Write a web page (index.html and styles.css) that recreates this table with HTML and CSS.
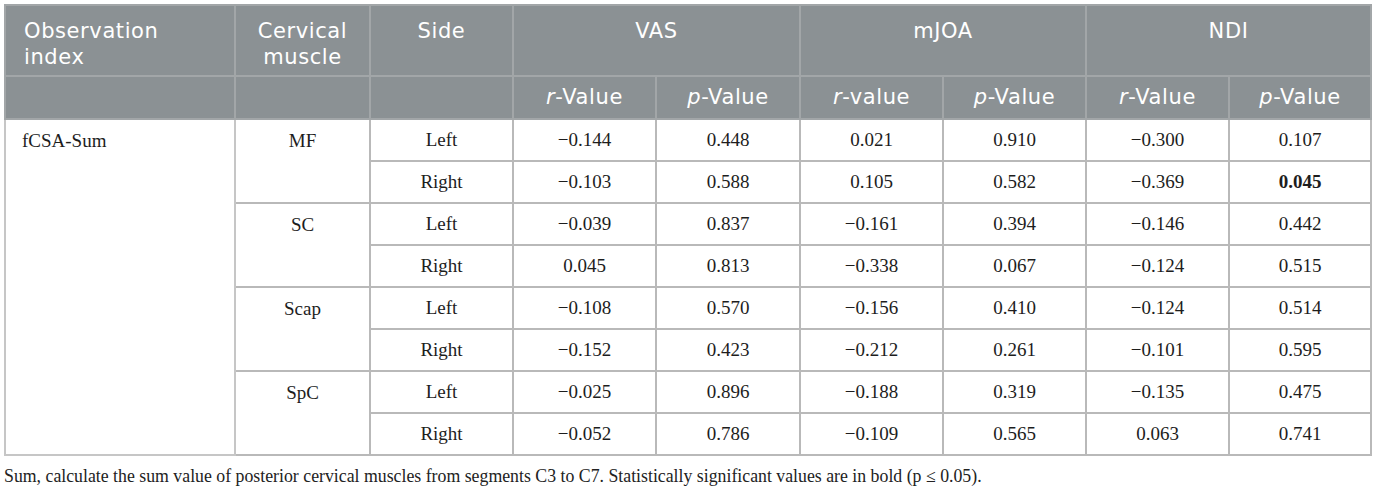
FILE: index.html
```html
<!DOCTYPE html>
<html lang="en">
<head>
<meta charset="utf-8">
<title>Correlation table</title>
<link rel="stylesheet" href="styles.css">
</head>
<body>
<div class="wrap">
  <table class="data">
    <colgroup>
      <col class="c-obs">
      <col class="c-mus">
      <col class="c-side">
      <col class="c-v">
      <col class="c-v2">
      <col class="c-v">
      <col class="c-v">
      <col class="c-v">
      <col class="c-last">
    </colgroup>
    <thead>
      <tr class="h1">
        <th class="left"><span class="ln">Observation</span><span class="ln">index</span></th>
        <th><span class="ln">Cervical</span><span class="ln">muscle</span></th>
        <th>Side</th>
        <th colspan="2">VAS</th>
        <th colspan="2">mJOA</th>
        <th colspan="2">NDI</th>
      </tr>
      <tr class="h2">
        <th></th>
        <th></th>
        <th></th>
        <th><i>r</i>-Value</th>
        <th><i>p</i>-Value</th>
        <th><i>r</i>-value</th>
        <th><i>p</i>-Value</th>
        <th><i>r</i>-Value</th>
        <th><i>p</i>-Value</th>
      </tr>
    </thead>
    <tbody>
      <tr>
        <td class="obs" rowspan="8">fCSA-Sum</td>
        <td class="mus" rowspan="2">MF</td>
        <td>Left</td><td>−0.144</td><td>0.448</td><td>0.021</td><td>0.910</td><td>−0.300</td><td>0.107</td>
      </tr>
      <tr>
        <td>Right</td><td>−0.103</td><td>0.588</td><td>0.105</td><td>0.582</td><td>−0.369</td><td><b>0.045</b></td>
      </tr>
      <tr>
        <td class="mus" rowspan="2">SC</td>
        <td>Left</td><td>−0.039</td><td>0.837</td><td>−0.161</td><td>0.394</td><td>−0.146</td><td>0.442</td>
      </tr>
      <tr>
        <td>Right</td><td>0.045</td><td>0.813</td><td>−0.338</td><td>0.067</td><td>−0.124</td><td>0.515</td>
      </tr>
      <tr>
        <td class="mus" rowspan="2">Scap</td>
        <td>Left</td><td>−0.108</td><td>0.570</td><td>−0.156</td><td>0.410</td><td>−0.124</td><td>0.514</td>
      </tr>
      <tr>
        <td>Right</td><td>−0.152</td><td>0.423</td><td>−0.212</td><td>0.261</td><td>−0.101</td><td>0.595</td>
      </tr>
      <tr>
        <td class="mus" rowspan="2">SpC</td>
        <td>Left</td><td>−0.025</td><td>0.896</td><td>−0.188</td><td>0.319</td><td>−0.135</td><td>0.475</td>
      </tr>
      <tr>
        <td>Right</td><td>−0.052</td><td>0.786</td><td>−0.109</td><td>0.565</td><td>0.063</td><td>0.741</td>
      </tr>
    </tbody>
  </table>
  <p class="note">Sum, calculate the sum value of posterior cervical muscles from segments C3 to C7. Statistically significant values are in bold (p ≤ 0.05).</p>
</div>
</body>
</html>
```

FILE: styles.css
```css
html, body {
  margin: 0;
  padding: 0;
  background: #ffffff;
}

.wrap {
  padding: 4px 5px 0 4px;
}

.data {
  width: 1366px;
  table-layout: fixed;
  border-collapse: collapse;
  border: 2px solid #c6c6c6;
}

.c-obs { width: 230px; }
.c-mus { width: 135px; }
.c-side { width: 143px; }
.c-v { width: 143px; }
.c-v2 { width: 144px; }
.c-last { width: 142px; }

.data th {
  background: #8b9194;
  color: #ffffff;
  font-family: "DejaVu Sans", "Open Sans", sans-serif;
  font-weight: 400;
  font-size: 21px;
  letter-spacing: 0.6px;
  line-height: 26px;
  text-align: center;
  border: 2px solid #a2a6a8;
  padding: 0 8px;
}

.data th .ln {
  display: block;
  height: 26px;
}

.data th.left {
  text-align: left;
  padding-left: 18px;
}

.h1 th {
  height: 71px;
  vertical-align: top;
  padding-top: 12px;
  box-sizing: border-box;
}

.h2 th {
  height: 43px;
  vertical-align: middle;
  padding-bottom: 1px;
  box-sizing: border-box;
}

.data td {
  font-family: "Liberation Serif", "Times New Roman", serif;
  font-size: 19px;
  color: #1d1d1d;
  text-align: center;
  vertical-align: middle;
  height: 42px;
  box-sizing: border-box;
  border: 2px solid #b9b9b9;
  padding: 0 6px;
}

.data td.obs {
  text-align: left;
  vertical-align: top;
  padding: 10px 16px 0;
  line-height: 22px;
  border-color: #c6c6c6;
}

.data td.mus {
  vertical-align: top;
  padding-top: 10px;
  line-height: 22px;
}

.note {
  margin: 10px 0 0;
  font-family: "Liberation Serif", "Times New Roman", serif;
  font-size: 17.8px;
  line-height: normal;
  color: #222222;
}
```
